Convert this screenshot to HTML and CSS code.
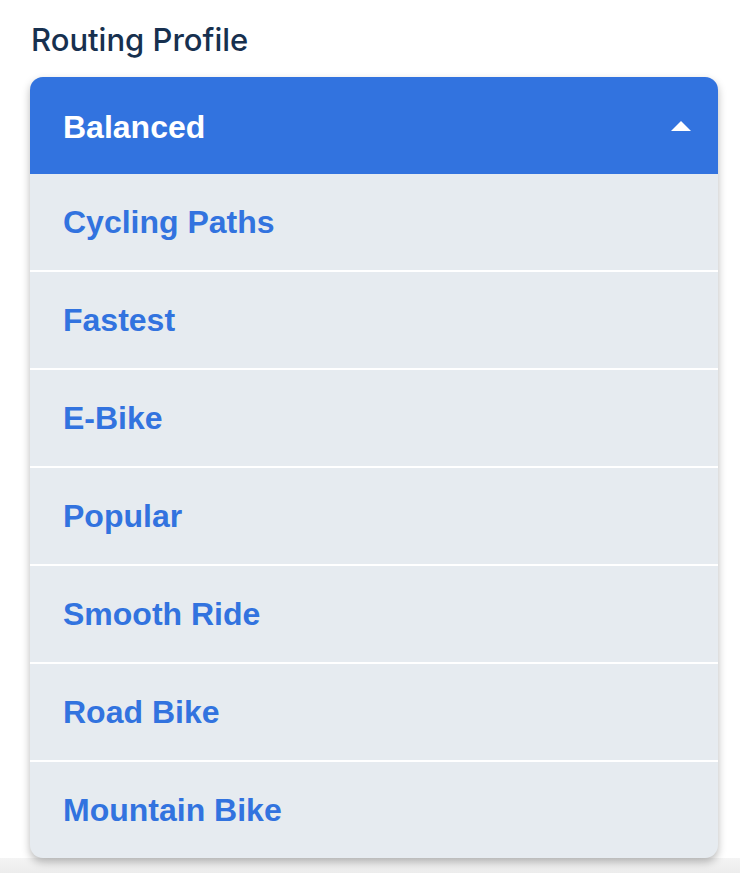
FILE: index.html
```html
<!DOCTYPE html>
<html lang="en">
<head>
    <meta charset="UTF-8">
    <meta name="viewport" content="width=device-width, initial-scale=1.0">
    <title>Routing Profile</title>
    <link rel="stylesheet" href="styles.css">
</head>
<body>
    <div class="page">
        <label class="field-label">Routing Profile</label>
        <div class="dropdown">
            <div class="dropdown-selected">
                <span>Balanced</span>
                <span class="caret"></span>
            </div>
            <ul class="dropdown-list">
                <li>Cycling Paths</li>
                <li>Fastest</li>
                <li>E-Bike</li>
                <li>Popular</li>
                <li>Smooth Ride</li>
                <li>Road Bike</li>
                <li>Mountain Bike</li>
            </ul>
        </div>
    </div>
    <div class="page-bottom"></div>
</body>
</html>
```

FILE: styles.css
```css
body {
    margin: 0;
    padding: 0;
    background-color: #fff;
    font-family: "Liberation Sans", Arial, sans-serif;
}
.page {
    padding: 20px 22px 0 30px;
    height: 838px;
}
.field-label {
    display: block;
    font-family: Inter, "Liberation Sans", sans-serif;
    font-weight: 500;
    font-size: 31px;
    line-height: 40px;
    color: #17304f;
    margin: 0 0 17px 1px;
}
.dropdown {
    position: relative;
    z-index: 1;
    border-radius: 13px;
    overflow: hidden;
    background-color: #e6ebf0;
    box-shadow: 0 4px 8px rgba(0, 0, 0, 0.28);
}
.dropdown-selected {
    height: 97px;
    box-sizing: border-box;
    display: flex;
    align-items: center;
    justify-content: space-between;
    padding: 4px 27px 0 33px;
    background-color: #3273df;
    color: #fff;
    font-weight: bold;
    font-size: 32px;
}
.caret {
    width: 0;
    height: 0;
    margin-top: -4px;
    border-left: 10px solid transparent;
    border-right: 10px solid transparent;
    border-bottom: 10px solid #fff;
}
.dropdown-list {
    list-style: none;
    margin: 0;
    padding: 0;
}
.dropdown-list li {
    height: 96px;
    display: flex;
    align-items: center;
    padding-left: 33px;
    color: #3273df;
    font-weight: bold;
    font-size: 32px;
    border-top: 2px solid #fff;
}
.dropdown-list li:first-child {
    border-top: none;
}
.page-bottom {
    height: 15px;
    background: linear-gradient(#f4f4f4, #ececec);
}
```
